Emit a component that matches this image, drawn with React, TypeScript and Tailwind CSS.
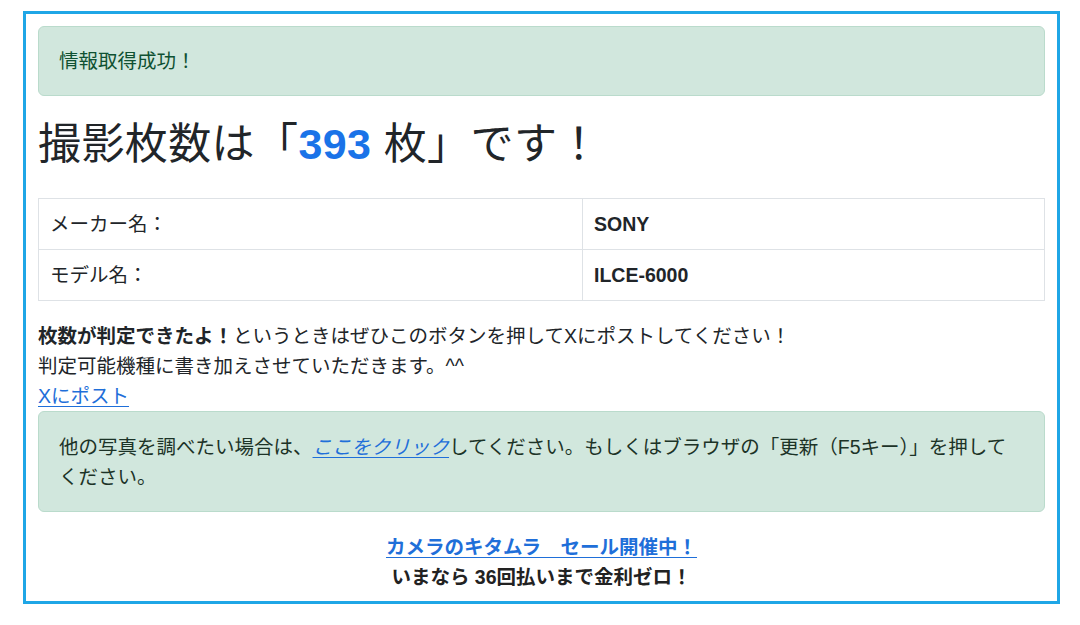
export default function App() {
  const font = { fontFamily: '"Liberation Sans", "Noto Sans CJK JP", sans-serif' };

  return (
    <div className="min-h-[625px] bg-white text-[19.5px] leading-[30px] text-[#212529]" style={font}>
      <div className="ml-[23px] mt-[11px] w-[1037px] border-[3px] border-[#1fa6e6] px-[12px] pt-[12px] pb-[9px]">
        {/* 取得結果 */}
        <div className="rounded-[6px] border border-[#badbcc] bg-[#d1e7dd] px-[20px] py-[22px] leading-[24px] text-[#0f5132]">
          情報取得成功！
        </div>

        <h1 className="mt-[22px] text-[43px] font-normal leading-[52px] tracking-[0.4px]">
          撮影枚数は「<span className="font-bold text-[#1a73e8]">393</span> 枚」です！
        </h1>

        <table className="mt-[28px] w-full border-collapse border border-[#dee2e6]">
          <tbody>
            <tr className="h-[51px]">
              <td className="w-[544px] border border-[#dee2e6] px-[11px] align-middle">メーカー名：</td>
              <td className="border border-[#dee2e6] px-[11px] align-middle font-bold">SONY</td>
            </tr>
            <tr className="h-[51px]">
              <td className="border border-[#dee2e6] px-[11px] align-middle">モデル名：</td>
              <td className="border border-[#dee2e6] px-[11px] align-middle font-bold">ILCE-6000</td>
            </tr>
          </tbody>
        </table>

        <p className="mt-[20px]">
          <b>枚数が判定できたよ！</b>というときはぜひこのボタンを押してXにポストしてください！
          <br />
          判定可能機種に書き加えさせていただきます。^^
        </p>
        <a href="#" className="block w-fit text-[#1f6fd9] underline underline-offset-[3px]">
          Xにポスト
        </a>

        <div className="rounded-[6px] border border-[#badbcc] bg-[#d1e7dd] px-[20px] py-[19.5px] text-[#1c3327]">
          他の写真を調べたい場合は、
          <a href="#" className="italic text-[#1f6fd9] underline underline-offset-[3px]">ここをクリック</a>
          してください。もしくはブラウザの「更新（F5キー）」を押してください。
        </div>

        <div className="mt-[20px] text-center font-bold">
          <a href="#" className="text-[#1f6fd9] underline underline-offset-[3px]">
            カメラのキタムラ　セール開催中！
          </a>
          <div className="text-[#222]">いまなら 36回払いまで金利ゼロ！</div>
        </div>
      </div>
    </div>
  );
}
